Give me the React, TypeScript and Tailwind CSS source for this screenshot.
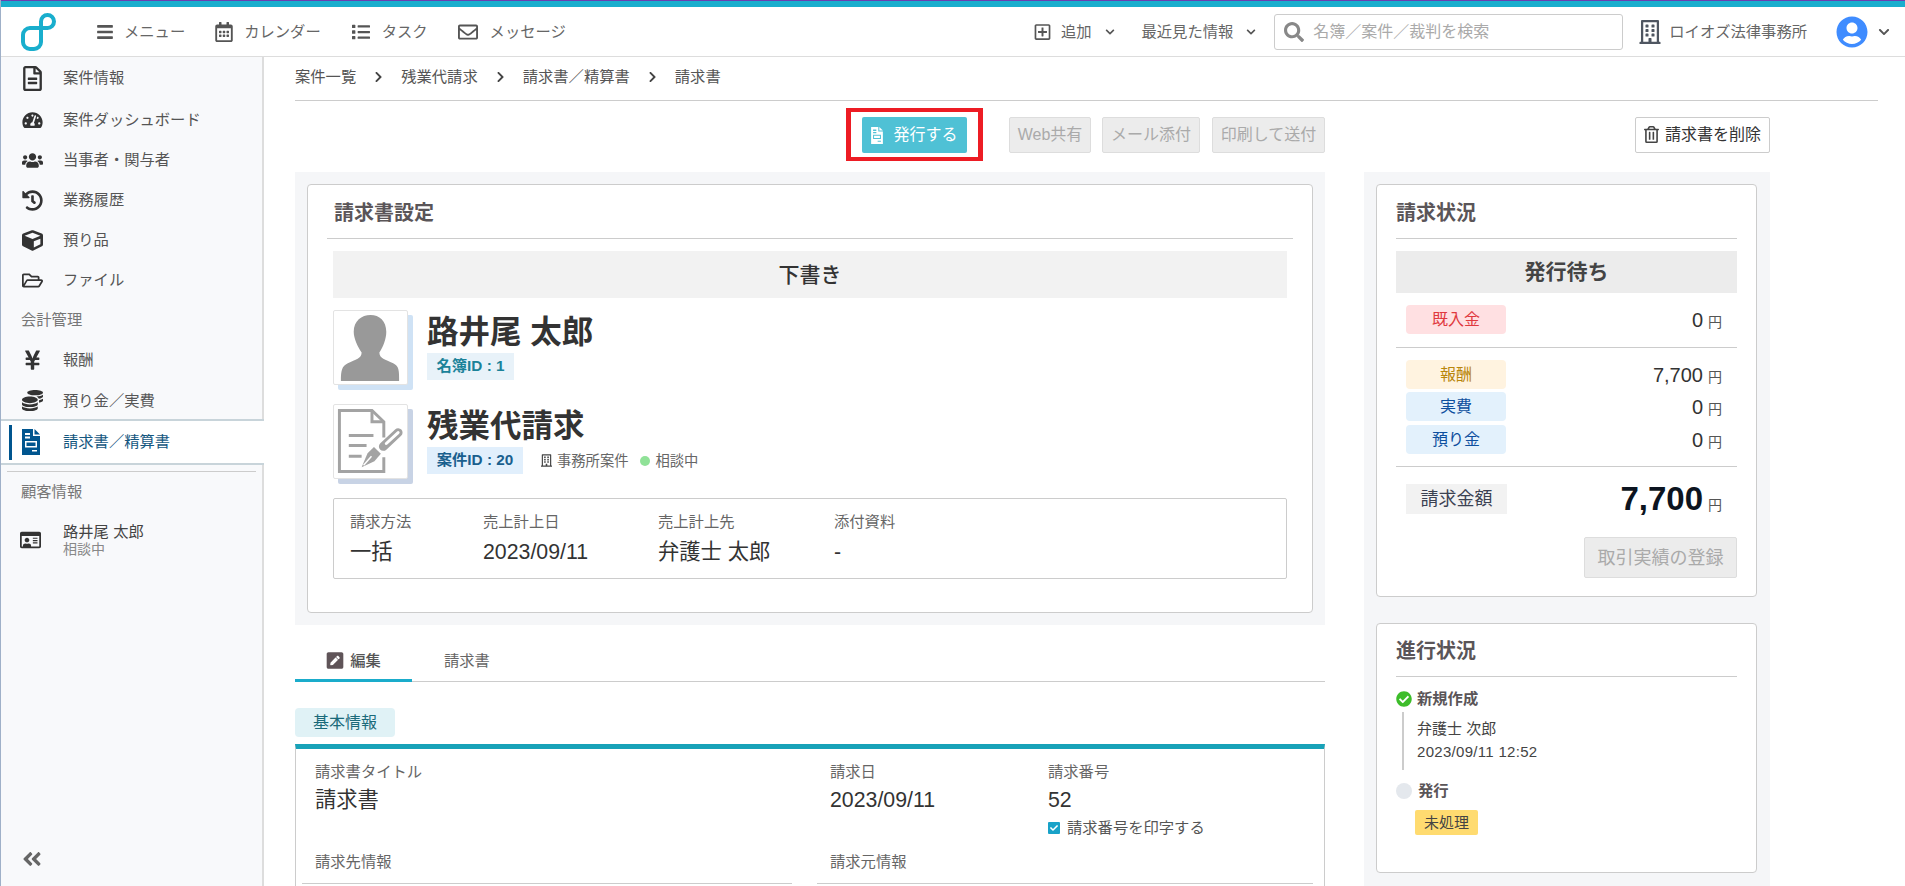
import type { ReactNode } from "react";
import {
  FaBars,
  FaRegCalendarAlt,
  FaList,
  FaRegEnvelope,
  FaRegPlusSquare,
  FaChevronDown,
  FaChevronRight,
  FaSearch,
  FaRegBuilding,
  FaUserCircle,
  FaRegFileAlt,
  FaTachometerAlt,
  FaUsers,
  FaHistory,
  FaCube,
  FaRegFolderOpen,
  FaYenSign,
  FaCoins,
  FaRegIdCard,
  FaAngleDoubleLeft,
  FaRegTrashAlt,
  FaPenSquare,
  FaCheckCircle,
  FaCheck,
} from "react-icons/fa";

function Logo() {
  return (
    <svg viewBox="0 0 36 38" className="w-[36px] h-[38px]" fill="none" stroke="#19aecd" strokeWidth="4">
      <path d="M20 8.5a6.5 6.5 0 1 1 6.5 6.5H9a7 7 0 0 0-7 7V29a7 7 0 0 0 7 7h4a7 7 0 0 0 7-7V8.5" />
    </svg>
  );
}

function InvoiceIcon({ className }: { className: string }) {
  return (
    <svg viewBox="0 0 18 26" className={className} fill="currentColor">
      <path
        fillRule="evenodd"
        d="M0 0H11V7H18V26H0ZM3 4V6H8V4ZM3 7.5V9.5H8V7.5ZM3 12V18.5H15V12ZM4.5 13.5H13.5V17H4.5ZM10 21V22.5H15V21Z"
      />
      <path d="M12.5 0L18 5.5H12.5Z" />
    </svg>
  );
}

function Silhouette() {
  return (
    <svg viewBox="0 0 74 74" className="w-full h-full">
      <path
        fill="#999"
        d="M7 71C7 60 8 56 14 53C22 49 28 48 28 42C24 36 20 28 20 21C20 10 28 4 37 4C46 4 53 10 53 21C53 28 50 36 46 42C46 48 52 49 60 53C66 56 66 60 66 71Z"
      />
    </svg>
  );
}

function ContractIcon() {
  return (
    <svg viewBox="0 0 74 74" className="w-full h-full" fill="none" stroke="#a3a3a3" strokeWidth="3">
      <path d="M50.5 33V17L38.500 5.500H5.500V67.500H50.500V53" />
      <path d="M38.500 5.500V17H50.500" />
      <path d="M15 31H40M15 41H33M15 52H28" />
      <path strokeWidth="9" strokeLinecap="round" d="M50 42L65 28" />
      <path stroke="#fff" strokeWidth="3" strokeLinecap="round" d="M53 39L65 28" />
      <path fill="#a3a3a3" stroke="none" d="M40.500 42.500L47.500 49.500 41 57 28 63 34 49Z" />
      <path stroke="#fff" strokeWidth="1.500" d="M30 61L38 52" />
    </svg>
  );
}

function NavItem({ icon, label, className = "h-[40px]" }: { icon: ReactNode; label: string; className?: string }) {
  return (
    <div className={`flex items-center pl-[20px] ${className}`}>
      <span className="w-[22px] flex justify-center text-[#333]">{icon}</span>
      <span className="ml-[20px] text-[15.300px] leading-[20px] text-[#555]">{label}</span>
    </div>
  );
}

function TopLink({ icon, label, gap }: { icon: ReactNode; label: string; gap: string }) {
  return (
    <div className={`flex items-center text-[15.300px] leading-[20px] text-[#666] ${gap}`}>
      {icon}
      <span>{label}</span>
    </div>
  );
}

function Crumb({ label }: { label: string }) {
  return (
    <>
      <span>{label}</span>
      <FaChevronRight className="mx-[18px] w-[9px] h-[12px] text-[#444]" />
    </>
  );
}

function DisabledButton({ label, className }: { label: string; className: string }) {
  return (
    <div className={`flex items-center justify-center rounded-[2px] border border-[#ddd] bg-[#ececec] text-[#aaa] leading-[20px] ${className}`}>
      {label}
    </div>
  );
}

function CardHead({ title, className }: { title: string; className: string }) {
  return (
    <div className={`flex items-center pt-[2px] border-b border-[#ccc] text-[20px] leading-[28px] font-bold text-[#5a5558] ${className}`}>
      {title}
    </div>
  );
}

function AmountRow({ label, pill, value, className = "" }: { label: string; pill: string; value: string; className?: string }) {
  return (
    <div className={`flex items-center justify-between pl-[10px] pr-[15px] ${className}`}>
      <div className={`w-[100px] h-[29px] rounded-[4px] flex items-center justify-center text-[16px] leading-[20px] ${pill}`}>{label}</div>
      <div className="flex items-baseline text-[#333]">
        <span className="text-[20px] leading-[24px]">{value}</span>
        <span className="ml-[5px] text-[14px] leading-[20px] text-[#555]">円</span>
      </div>
    </div>
  );
}

function InfoCell({ label, value, className }: { label: string; value: string; className: string }) {
  return (
    <div className={className}>
      <div className="text-[15.300px] leading-[20px] text-[#666]">{label}</div>
      <div className="mt-[6px] text-[21.300px] leading-[28px] text-[#333]">{value}</div>
    </div>
  );
}

function InfoField({ label, value, className = "" }: { label: string; value: string; className?: string }) {
  return (
    <div className={className}>
      <div className="text-[15.300px] leading-[20px] text-[#666]">{label}</div>
      <div className="mt-[4px] text-[21.300px] leading-[28px] text-[#333]">{value}</div>
    </div>
  );
}

export default function App() {
  return (
    <div className="h-screen w-full overflow-hidden flex flex-col bg-white border-l border-[#9fb0c8] font-['Liberation_Sans','Noto_Sans_CJK_JP',sans-serif] text-[#333]">
      <div className="h-[7px] shrink-0 bg-[#19aecd] border-t border-[#6a3fb0]" />

      <header className="h-[50px] shrink-0 flex items-center pl-[20px] pr-[15px] border-b border-[#ddd]">
        <Logo />
        <nav className="ml-[39px] flex items-center gap-[30px]">
          <TopLink gap="gap-[10px]" label="メニュー" icon={<FaBars className="w-[18px] h-[18px] text-[#555]" />} />
          <TopLink gap="gap-[11px]" label="カレンダー" icon={<FaRegCalendarAlt className="w-[18px] h-[20px] text-[#555]" />} />
          <TopLink gap="gap-[11px]" label="タスク" icon={<FaList className="w-[20px] h-[18px] text-[#555]" />} />
          <TopLink gap="gap-[12px]" label="メッセージ" icon={<FaRegEnvelope className="w-[20px] h-[20px] text-[#555]" />} />
        </nav>
        <div className="ml-auto flex items-center text-[15.300px] leading-[20px] text-[#666]">
          <FaRegPlusSquare className="w-[17px] h-[18px] text-[#555]" />
          <span className="ml-[10px]">追加</span>
          <FaChevronDown className="ml-[13px] w-[10px] h-[10px] text-[#555]" />
          <span className="ml-[27px]">最近見た情報</span>
          <FaChevronDown className="ml-[13px] w-[10px] h-[10px] text-[#555]" />
          <div className="ml-[18px] w-[349px] h-[36px] flex items-center rounded-[3px] border border-[#ccc] pl-[9px]">
            <FaSearch className="w-[20px] h-[20px] text-[#888]" />
            <span className="ml-[9px] text-[16px] text-[#aaa]">名簿／案件／裁判を検索</span>
          </div>
          <FaRegBuilding className="ml-[16px] w-[22px] h-[24px] text-[#4f5661]" />
          <span className="ml-[8px]">ロイオズ法律事務所</span>
          <FaUserCircle className="ml-[29px] w-[32px] h-[32px] text-[#3f8cff]" />
          <FaChevronDown className="ml-[10px] w-[12px] h-[12px] text-[#555]" />
        </div>
      </header>

      <div className="flex-1 flex min-h-0">
        <aside className="w-[263px] shrink-0 flex flex-col bg-[#f8f9fb] border-r-2 border-[#ddd] pt-[1px]">
          <NavItem icon={<FaRegFileAlt className="w-[19px] h-[25px]" />} label="案件情報" />
          <NavItem className="h-[40px] mt-[2px]" icon={<FaTachometerAlt className="w-[21px] h-[18px]" />} label="案件ダッシュボード" />
          <NavItem icon={<FaUsers className="w-[21px] h-[17px]" />} label="当事者・関与者" />
          <NavItem icon={<FaHistory className="w-[21px] h-[21px]" />} label="業務履歴" />
          <NavItem icon={<FaCube className="w-[21px] h-[21px]" />} label="預り品" />
          <NavItem icon={<FaRegFolderOpen className="w-[21px] h-[19px]" />} label="ファイル" />
          <div className="h-[40px] flex items-center pl-[20px] text-[15.300px] text-[#777]">会計管理</div>
          <NavItem icon={<FaYenSign className="w-[17px] h-[22px]" />} label="報酬" />
          <NavItem className="h-[37px] mt-[2px]" icon={<FaCoins className="w-[21px] h-[21px]" />} label="預り金／実費" />
          <div className="h-[46px] shrink-0 -mr-[2px] flex items-center pl-[8px] bg-white border-y-2 border-[#c8d4da]">
            <span className="w-[3px] h-[35px] bg-[#00558f]" />
            <InvoiceIcon className="ml-[10px] w-[18px] h-[26px] text-[#00558f]" />
            <span className="ml-[23px] text-[15.300px] leading-[20px] text-[#15577f]">請求書／精算書</span>
          </div>
          <div className="mt-[6px] mx-[6px] border-t border-[#ccc]" />
          <div className="h-[40px] flex items-center pl-[20px] text-[15.300px] text-[#777]">顧客情報</div>
          <div className="h-[56px] flex items-center pl-[19px]">
            <FaRegIdCard className="w-[21px] h-[20px] text-[#333]" />
            <div className="ml-[22px]">
              <div className="text-[15.300px] leading-[18px] text-[#444]">路井尾 太郎</div>
              <div className="text-[14px] leading-[16px] text-[#888]">相談中</div>
            </div>
          </div>
          <div className="mt-auto pb-[16px] pl-[20px]">
            <FaAngleDoubleLeft className="w-[22px] h-[22px] text-[#666]" />
          </div>
        </aside>

        <main className="flex-1 min-w-0 pl-[31px] pr-[27px]">
          <div className="h-[44px] flex items-center pb-[3px] border-b border-[#ccc] text-[15.300px] leading-[20px] text-[#555]">
            <Crumb label="案件一覧" />
            <Crumb label="残業代請求" />
            <Crumb label="請求書／精算書" />
            <span>請求書</span>
          </div>

          <div className="mt-[7px] flex gap-[39px]">
            <div className="w-[1030px] flex items-center justify-end">
              <div className="border-[4px] border-x-[5px] border-[#ed1c24] px-[11px] pt-[5px] pb-[4px]">
                <div className="w-[105px] h-[36px] flex items-center justify-center gap-[10px] rounded-[2px] bg-[#4fc1d5] text-white text-[16px] leading-[20px]">
                  <InvoiceIcon className="w-[12px] h-[17px]" />
                  <span>発行する</span>
                </div>
              </div>
              <div className="ml-[26px] flex gap-[11px]">
                <DisabledButton label="Web共有" className="w-[82px] h-[36px] text-[16px]" />
                <DisabledButton label="メール添付" className="w-[98px] h-[36px] text-[16px]" />
                <DisabledButton label="印刷して送付" className="w-[113px] ml-[1px] h-[36px] text-[16px]" />
              </div>
            </div>
            <div className="w-[406px] flex items-center justify-end">
              <div className="h-[36px] w-[135px] flex items-center justify-center gap-[6px] rounded-[2px] border border-[#ccc] bg-white text-[16px] leading-[20px] text-[#333]">
                <FaRegTrashAlt className="w-[15px] h-[17px] text-[#444]" />
                <span>請求書を削除</span>
              </div>
            </div>
          </div>

          <div className="mt-[11px] flex gap-[39px]">
            <div className="w-[1030px] shrink-0">
              <div className="bg-[#f5f6f8] p-[12px]">
                <div className="h-[429px] rounded-[4px] border border-[#ccc] bg-white px-[19px]">
                  <CardHead title="請求書設定" className="h-[54px] pl-[7px]" />
                  <div className="mx-[6px]">
                    <div className="mt-[12px] h-[47px] flex items-center justify-center bg-[#f2f2f2] text-[21px] leading-[28px] font-medium text-[#333]">
                      下書き
                    </div>

                    <div className="mt-[12px] flex gap-[19px]">
                      <div className="w-[75px] h-[75px] rounded-[2px] border border-[#e3e3e3] bg-white shadow-[5px_5px_0_#cfe2f5]">
                        <Silhouette />
                      </div>
                      <div>
                        <div className="h-[43px] flex items-center text-[31.500px] leading-[40px] font-bold text-[#333]">路井尾 太郎</div>
                        <div className="w-[87px] h-[27px] flex items-center justify-center bg-[#e8f2f9] text-[15.300px] font-bold text-[#1b8299]">
                          名簿ID : 1
                        </div>
                      </div>
                    </div>

                    <div className="mt-[19px] flex gap-[19px]">
                      <div className="w-[75px] h-[75px] rounded-[2px] border border-[#e3e3e3] bg-white shadow-[5px_5px_0_#c8d3e5]">
                        <ContractIcon />
                      </div>
                      <div>
                        <div className="h-[43px] flex items-center text-[31.500px] leading-[40px] font-bold text-[#333]">残業代請求</div>
                        <div className="flex items-center">
                          <div className="w-[96px] h-[27px] flex items-center justify-center bg-[#e1effc] text-[15.300px] font-bold text-[#1a5f8e]">案件ID : 20</div>
                          <FaRegBuilding className="ml-[18px] w-[11px] h-[15px] text-[#444]" />
                          <span className="ml-[5px] text-[14.300px] leading-[20px] text-[#666]">事務所案件</span>
                          <span className="ml-[12px] w-[10px] h-[10px] rounded-full bg-[#90e298]" />
                          <span className="ml-[5px] text-[14.300px] leading-[20px] text-[#666]">相談中</span>
                        </div>
                      </div>
                    </div>

                    <div className="mt-[19px] h-[81px] flex items-start rounded-[2px] border border-[#ccc] pl-[16px] pt-[13px]">
                      <InfoCell label="請求方法" value="一括" className="w-[133px]" />
                      <InfoCell label="売上計上日" value="2023/09/11" className="w-[175px]" />
                      <InfoCell label="売上計上先" value="弁護士 太郎" className="w-[176px]" />
                      <InfoCell label="添付資料" value="-" className="w-[120px]" />
                    </div>
                  </div>
                </div>
              </div>

              <div className="mt-[25px] h-[32px] flex items-start border-b border-[#ccc] text-[15.300px] leading-[20px]">
                <div className="w-[117px] h-[32px] flex items-start justify-center gap-[6px] border-b-[3px] border-[#1aaccb] font-medium text-[#555]">
                  <FaPenSquare className="mt-[1px] w-[18px] h-[19px] text-[#5f5458]" />
                  <span className="mt-[1px]">編集</span>
                </div>
                <div className="ml-[32px] mt-[1px] text-[#666]">請求書</div>
              </div>

              <div className="mt-[26px] w-[100px] h-[29px] flex items-center justify-center rounded-[4px] bg-[#e0f2f6] text-[16px] leading-[20px] text-[#1a6a7a]">
                基本情報
              </div>

              <div className="mt-[7px] h-[150px] border-t-[5px] border-x border-t-[#18a2b8] border-x-[#ccc]">
                <div className="h-[103px] pt-[13px] pl-[19px] flex items-start">
                  <InfoField label="請求書タイトル" value="請求書" className="w-[515px]" />
                  <InfoField label="請求日" value="2023/09/11" className="w-[218px]" />
                  <div>
                    <InfoField label="請求番号" value="52" />
                    <div className="mt-[5px] flex items-center gap-[7px]">
                      <span className="w-[12px] h-[12px] rounded-[1px] bg-[#18a2c8] flex items-center justify-center">
                        <FaCheck className="w-[8px] h-[8px] text-white" />
                      </span>
                      <span className="text-[15.300px] leading-[18px] text-[#555]">請求番号を印字する</span>
                    </div>
                  </div>
                </div>
                <div className="flex">
                  <div className="ml-[6px] w-[490px] h-[32px] pl-[13px] border-b border-[#ccc] text-[15.300px] leading-[20px] text-[#666]">請求先情報</div>
                  <div className="ml-[25px] w-[496px] h-[32px] pl-[13px] border-b border-[#ccc] text-[15.300px] leading-[20px] text-[#666]">請求元情報</div>
                </div>
              </div>
            </div>

            <div className="w-[406px] shrink-0 h-[714px] bg-[#f5f6f8] pl-[12px] pr-[13px] pt-[12px]">
              <div className="h-[413px] rounded-[4px] border border-[#ccc] bg-white px-[19px]">
                <CardHead title="請求状況" className="h-[54px]" />
                <div className="mt-[12px] h-[42px] flex items-center justify-center bg-[#ececec] text-[21px] leading-[28px] font-bold text-[#444]">
                  発行待ち
                </div>
                <AmountRow className="mt-[12px]" label="既入金" pill="bg-[#ffe0e2] text-[#e0393e]" value="0" />
                <div className="mt-[13px] border-t border-[#ccc]" />
                <AmountRow className="mt-[12px]" label="報酬" pill="bg-[#fff3e0] text-[#b8860b]" value="7,700" />
                <AmountRow className="mt-[3px]" label="実費" pill="bg-[#e3f1fc] text-[#0d4f9e]" value="0" />
                <AmountRow className="mt-[4px]" label="預り金" pill="bg-[#e3f1fc] text-[#0d4f9e]" value="0" />
                <div className="mt-[12px] border-t border-[#ccc]" />
                <div className="mt-[17px] h-[30px] flex items-center justify-between pl-[10px] pr-[15px]">
                  <div className="w-[101px] h-[30px] flex items-center justify-center bg-[#f2f2f2] text-[18px] leading-[24px] text-[#3c4252]">請求金額</div>
                  <div className="flex items-baseline">
                    <span className="text-[33px] leading-[36px] font-bold text-[#0c1420]">7,700</span>
                    <span className="ml-[5px] text-[14px] leading-[20px] text-[#555]">円</span>
                  </div>
                </div>
                <div className="mt-[23px] flex justify-end">
                  <DisabledButton label="取引実績の登録" className="w-[153px] h-[41px] text-[18px]" />
                </div>
              </div>

              <div className="mt-[26px] h-[250px] rounded-[4px] border border-[#ccc] bg-white px-[19px]">
                <CardHead title="進行状況" className="h-[53px]" />
                <div className="mt-[12px] h-[20px] flex items-center gap-[5px] text-[15.300px] font-bold text-[#5a5558]">
                  <FaCheckCircle className="w-[16px] h-[16px] text-[#3dbd2a]" />
                  <span>新規作成</span>
                </div>
                <div className="mt-[3px] ml-[6px] h-[58px] border-l-2 border-[#ccc] pl-[13px] pt-[8px] text-[#444]">
                  <div className="text-[15px] leading-[18px]">弁護士 次郎</div>
                  <div className="mt-[5px] text-[15px] leading-[18px] tracking-[0.300px]">2023/09/11 12:52</div>
                </div>
                <div className="mt-[11px] h-[20px] flex items-center gap-[6px] text-[15.300px] font-bold text-[#5a5558]">
                  <span className="w-[16px] h-[16px] rounded-full bg-[#e4e8ed]" />
                  <span>発行</span>
                </div>
                <div className="mt-[9px] ml-[19px] w-[63px] h-[25px] flex items-center justify-center rounded-[2px] bg-[#ffdb70] text-[15px] leading-[20px] text-[#444]">
                  未処理
                </div>
              </div>
            </div>
          </div>
        </main>
      </div>
    </div>
  );
}
